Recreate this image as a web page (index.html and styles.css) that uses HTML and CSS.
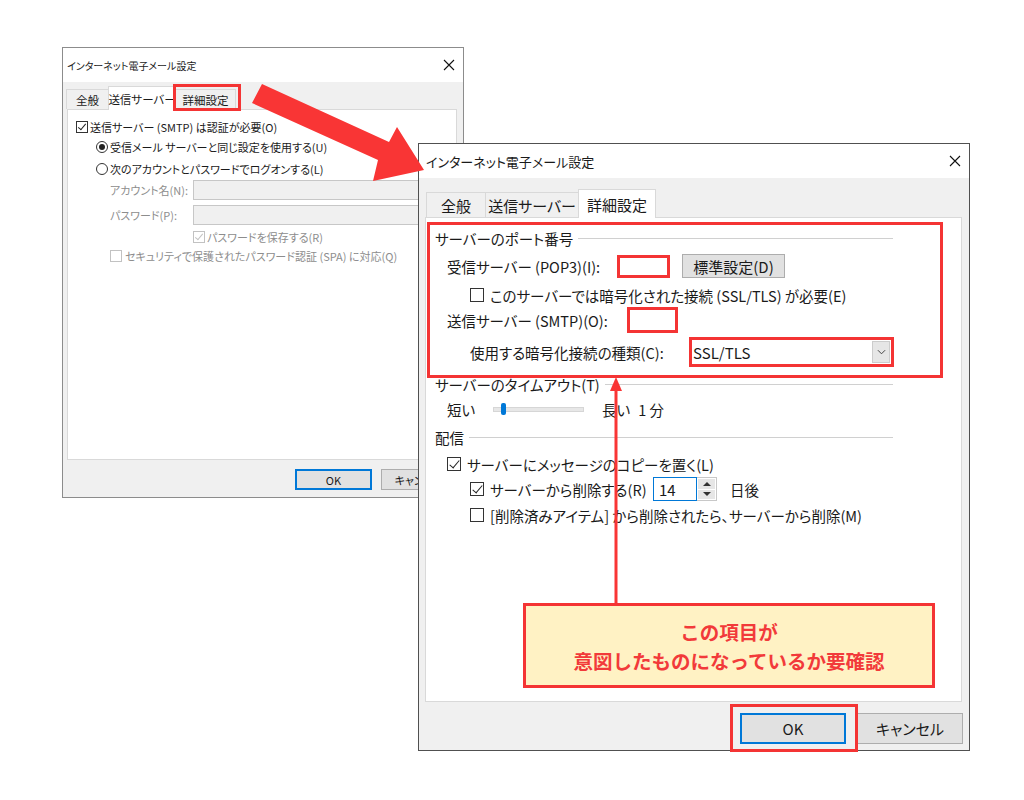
FILE: index.html
```html
<!DOCTYPE html>
<html lang="ja">
<head>
    <meta charset="UTF-8">
    <meta name="viewport" content="width=device-width, initial-scale=1.0">
    <title>インターネット電子メール設定</title>
    <link rel="stylesheet" href="styles.css">
</head>
<body>
<div class="desk">

    <!-- 後ろ: 送信サーバータブ -->
    <section class="dialog dlg-back">
        <div class="titlebar">
            <span>インターネット電子メール設定</span>
            <svg class="close" viewBox="0 0 12 12"><path d="M1 1L11 11M11 1L1 11"/></svg>
        </div>
        <div class="tabs">
            <div class="tab t-gen">全般</div>
            <div class="tab t-out active">送信サーバー</div>
            <div class="tab t-adv">詳細設定</div>
        </div>
        <div class="panel">
            <div class="row b1"><span class="cb on"></span>送信サーバー (SMTP) は認証が必要(O)</div>
            <div class="row b2"><span class="rb on"></span>受信メール サーバーと同じ設定を使用する(U)</div>
            <div class="row b3"><span class="rb"></span>次のアカウントとパスワードでログオンする(L)</div>
            <div class="row b4 muted"><span class="lbl">アカウント名(N):</span><span class="field off"></span></div>
            <div class="row b5 muted"><span class="lbl">パスワード(P):</span><span class="field off"></span></div>
            <div class="row b6 muted"><span class="cb on dis"></span>パスワードを保存する(R)</div>
            <div class="row b7 muted"><span class="cb dis"></span>セキュリティで保護されたパスワード認証 (SPA) に対応(Q)</div>
        </div>
        <div class="footer">
            <button class="btn default">OK</button>
            <button class="btn">キャンセル</button>
        </div>
    </section>

    <!-- 前: 詳細設定タブ -->
    <section class="dialog dlg-front">
        <div class="titlebar">
            <span>インターネット電子メール設定</span>
            <svg class="close" viewBox="0 0 12 12"><path d="M1 1L11 11M11 1L1 11"/></svg>
        </div>
        <div class="tabs">
            <div class="tab t-gen">全般</div>
            <div class="tab t-out">送信サーバー</div>
            <div class="tab t-adv active">詳細設定</div>
        </div>
        <div class="panel">
            <div class="group">サーバーのポート番号</div>
            <div class="row f-pop">
                <span class="lbl w170">受信サーバー (POP3)(I):</span>
                <span class="field hl w53"></span>
                <button class="btn std">標準設定(D)</button>
            </div>
            <div class="row f-ssl"><span class="cb"></span>このサーバーでは暗号化された接続 (SSL/TLS) が必要(E)</div>
            <div class="row f-smtp">
                <span class="lbl w180">送信サーバー (SMTP)(O):</span>
                <span class="field hl w51"></span>
            </div>
            <div class="row f-enc">
                <span class="lbl w219">使用する暗号化接続の種類(C):</span>
                <div class="select">
                    <span>SSL/TLS</span>
                    <span class="drop"><svg viewBox="0 0 10 6"><path d="M1 1L5 5L9 1"/></svg></span>
                </div>
            </div>
            <div class="group g-time">サーバーのタイムアウト(T)</div>
            <div class="row f-slide">
                <span class="lbl w46">短い</span>
                <span class="track"><span class="thumb"></span></span>
                <span class="long">長い</span>
                <span class="mins">1 分</span>
            </div>
            <div class="group g-deliv">配信</div>
            <div class="row f-c1"><span class="cb on"></span>サーバーにメッセージのコピーを置く(L)</div>
            <div class="row f-c2">
                <span class="cb on"></span>
                <span class="lbl w163">サーバーから削除する(R)</span>
                <div class="spin">
                    <span class="spin-val">14</span>
                    <span class="spin-btns"><i class="up"></i><i class="dn"></i></span>
                </div>
                <span class="days">日後</span>
            </div>
            <div class="row f-c3"><span class="cb"></span>[削除済みアイテム] から削除されたら、サーバーから削除(M)</div>
        </div>
        <div class="footer">
            <button class="btn default">OK</button>
            <button class="btn">キャンセル</button>
        </div>
    </section>

    <!-- 注釈 -->
    <svg class="notes" viewBox="0 0 1024 800">
        <polygon points="262,84 389,142 397,127 424,170 373,181 378,160 252,103"/>
        <line x1="616" y1="604" x2="616" y2="388"/>
        <polygon points="616,377 610,391 622,391"/>
    </svg>
    <div class="mark mark-tab"></div>
    <div class="mark mark-port"></div>
    <div class="mark mark-ok"></div>
    <div class="callout">
        <span>この項目が</span>
        <span>意図したものになっているか要確認</span>
    </div>
</div>
</body>
</html>
```

FILE: styles.css
```css
body {
    margin: 0;
    background: #ffffff;
}

.desk {
    position: relative;
    width: 1024px;
    height: 800px;
    overflow: hidden;
    background: #ffffff;
    font-family: "Noto Sans CJK JP", "Noto Sans", sans-serif;
    font-feature-settings: "palt";
    color: #1a1a1a;
}

/* ---------- window frame ---------- */

.dialog {
    position: absolute;
    box-sizing: border-box;
    display: flex;
    flex-direction: column;
    background: #f0f0f0;
    border: 1px solid #8c8c8c;
}

.dlg-back {
    left: 62px;
    top: 47px;
    width: 402px;
    height: 451px;
    font-size: 11px;
}

.dlg-front {
    left: 418px;
    top: 143px;
    width: 552px;
    height: 608px;
    font-size: 14.5px;
    border-color: #505050;
}

.titlebar {
    flex: none;
    display: flex;
    align-items: center;
    justify-content: space-between;
    height: 34px;
    background: #ffffff;
    padding: 0 8px 0 7px;
    white-space: nowrap;
}

.dlg-back .titlebar {
    padding-left: 4px;
    font-size: 10px;
}

.dlg-front .titlebar {
    font-size: 13px;
}

.close {
    width: 12px;
    height: 12px;
    fill: none;
    stroke: #111;
    stroke-width: 1.1;
}

/* ---------- tabs ---------- */

.tabs {
    flex: none;
    display: flex;
    align-items: flex-end;
    position: relative;
    z-index: 1;
}

.tab {
    box-sizing: border-box;
    display: flex;
    align-items: center;
    justify-content: center;
    white-space: nowrap;
    border: 1px solid #d9d9d9;
    border-bottom: none;
    background: #f0f0f0;
    margin-right: -1px;
}

.tab.active {
    background: #ffffff;
    margin-bottom: -1px;
}

.dlg-front .tabs {
    margin: 11px 0 0 7px;
    height: 28px;
    font-size: 15px;
}

.dlg-front .tab { height: 25px; }
.dlg-front .tab.active { height: 29px; }
.dlg-front .t-gen { width: 60px; }
.dlg-front .t-out { width: 94px; }
.dlg-front .t-adv { width: 78px; }

.dlg-back .tabs {
    margin: 4px 0 0 3px;
    height: 23px;
    font-size: 11.5px;
}

.dlg-back .tab { height: 20px; }
.dlg-back .tab.active { height: 24px; }
.dlg-back .t-gen { width: 43px; }
.dlg-back .t-out { width: 68px; }
.dlg-back .t-adv { width: 61px; }

/* ---------- panel ---------- */

.panel {
    flex: none;
    box-sizing: border-box;
    display: flex;
    flex-direction: column;
    background: #ffffff;
    border: 1px solid #d9d9d9;
}

.dlg-front .panel {
    margin: 0 7px 0 6px;
    height: 485px;
    padding: 10px 0 0 9px;
}

.dlg-back .panel {
    margin: 0 6px 0 4px;
    height: 351px;
    padding: 8px 0 0 8px;
}

.row {
    display: flex;
    align-items: center;
    white-space: nowrap;
}

.lbl {
    flex: none;
}

.w46 { width: 46px; }
.w163 { width: 163px; }
.w170 { width: 170px; }
.w180 { width: 180px; }
.w219 { width: 219px; }

.group {
    display: flex;
    align-items: center;
    gap: 5px;
    width: 458px;
    height: 20px;
}

.group::after {
    content: "";
    flex: 1;
    border-top: 1px solid #d0d0d0;
    margin-top: 1px;
}

/* front rows */
.f-pop   { margin-top: 6px; height: 24px; padding-left: 12px; }
.f-ssl   { margin-top: 7px; height: 20px; padding-left: 35px; }
.f-smtp  { margin-top: 2px; height: 26px; padding-left: 12px; }
.f-enc   { margin-top: 4px; height: 30px; padding-left: 35px; }
.g-time  { margin-top: 7px; }
.f-slide { margin-top: 5px; height: 20px; padding-left: 12px; }
.g-deliv { margin-top: 8px; }
.f-c1    { margin-top: 7px; height: 20px; padding-left: 12px; }
.f-c2    { margin-top: 3px; height: 24px; padding-left: 35px; }
.f-c3    { margin-top: 4px; height: 20px; padding-left: 35px; }

/* back rows */
.b1 { height: 18px; }
.b2 { margin-top: 2px; height: 18px; padding-left: 20px; }
.b3 { margin-top: 4px; height: 18px; padding-left: 20px; }
.b4 { margin-top: 2px; height: 20px; padding-left: 34px; }
.b5 { margin-top: 5px; height: 20px; padding-left: 34px; }
.b6 { margin-top: 3px; height: 18px; padding-left: 117px; }
.b7 { margin-top: 1px; height: 18px; padding-left: 34px; }

.b4 .lbl,
.b5 .lbl {
    width: 83px;
}

.muted {
    color: #8d8d8d;
}

/* ---------- controls ---------- */

.cb {
    flex: none;
    position: relative;
    box-sizing: border-box;
    width: 14px;
    height: 14px;
    border: 1px solid #333;
    background: #ffffff;
    margin-right: 6px;
}

.cb.on::after {
    content: "";
    position: absolute;
    left: 4px;
    top: 0;
    width: 4px;
    height: 9px;
    border: solid #222;
    border-width: 0 1.5px 1.5px 0;
    transform: rotate(40deg);
}

.dlg-back .cb {
    width: 12px;
    height: 12px;
    margin-right: 2px;
}

.dlg-back .cb.on::after {
    left: 3px;
    top: 0;
    width: 3px;
    height: 7px;
    border-width: 0 1px 1px 0;
}

.b7 .cb {
    margin-right: 3px;
}

.cb.dis,
.cb.dis::after {
    border-color: #c2c2c2;
}

.rb {
    flex: none;
    position: relative;
    box-sizing: border-box;
    width: 12px;
    height: 12px;
    border: 1px solid #333;
    border-radius: 50%;
    background: #ffffff;
    margin-right: 2px;
}

.rb.on::after {
    content: "";
    position: absolute;
    inset: 2px;
    border-radius: 50%;
    background: #222;
}

.field {
    flex: none;
    box-sizing: border-box;
    background: #ffffff;
}

.field.off {
    width: 260px;
    height: 20px;
    background: #f0f0f0;
    border: 1px solid #c7c7c7;
}

.field.hl {
    border: 3px solid #f43434;
}

.w53 { width: 53px; height: 23px; }
.w51 { width: 51px; height: 26px; }

.btn {
    flex: none;
    box-sizing: border-box;
    display: flex;
    align-items: center;
    justify-content: center;
    padding: 0;
    font: inherit;
    color: #1a1a1a;
    background: #e1e1e1;
    border: 1px solid #adadad;
}

.btn.default {
    border: 2px solid #0078d7;
}

.btn.std {
    width: 103px;
    height: 24px;
    margin-left: 12px;
    font-size: 15px;
}

.select {
    flex: none;
    box-sizing: border-box;
    display: flex;
    align-items: center;
    justify-content: space-between;
    width: 205px;
    height: 30px;
    padding: 0 1px 0 1px;
    background: #ffffff;
    border: 3px solid #f43434;
    font-size: 15px;
}

.drop {
    box-sizing: border-box;
    display: flex;
    align-items: center;
    justify-content: center;
    width: 18px;
    height: 22px;
    background: #e6e6e6;
    border: 1px solid #cccccc;
}

.drop svg {
    width: 9px;
    height: 6px;
    fill: none;
    stroke: #444;
    stroke-width: 1.1;
}

.track {
    flex: none;
    position: relative;
    box-sizing: border-box;
    width: 91px;
    height: 5px;
    background: #e7e7e7;
    border: 1px solid #d6d6d6;
}

.thumb {
    position: absolute;
    left: 7px;
    top: -5px;
    width: 5px;
    height: 12px;
    border-radius: 2px;
    background: #0078d7;
}

.long {
    margin-left: 18px;
}

.mins {
    margin-left: 8px;
}

.spin {
    flex: none;
    display: flex;
    height: 24px;
}

.spin-val {
    box-sizing: border-box;
    display: flex;
    align-items: center;
    width: 44px;
    padding-left: 5px;
    background: #ffffff;
    border: 1px solid #0078d7;
    font-size: 15px;
}

.spin-btns {
    box-sizing: border-box;
    display: flex;
    flex-direction: column;
    gap: 1px;
    width: 20px;
    padding: 1px;
    background: #ffffff;
    border: 1px solid #c8c8c8;
    border-left: none;
}

.spin-btns i {
    flex: 1;
    position: relative;
    background: #e6e6e6;
}

.spin-btns i::after {
    content: "";
    position: absolute;
    left: 50%;
    top: 50%;
    margin: -2px 0 0 -4px;
    border-left: 4px solid transparent;
    border-right: 4px solid transparent;
}

.spin-btns .up::after { border-bottom: 4px solid #333; }
.spin-btns .dn::after { border-top: 4px solid #333; }

.days {
    margin-left: 13px;
}

/* ---------- footer ---------- */

.footer {
    flex: none;
    display: flex;
    justify-content: flex-end;
}

.dlg-front .footer {
    gap: 11px;
    padding: 11px 6px 0 0;
    font-size: 15px;
}

.dlg-front .btn:not(.std) {
    width: 106px;
    height: 31px;
}

.dlg-back .footer {
    gap: 9px;
    padding: 9px 5px 0 0;
    font-size: 11px;
}

.dlg-back .footer .btn {
    width: 77px;
    height: 21px;
}

/* ---------- annotations ---------- */

.notes {
    position: absolute;
    left: 0;
    top: 0;
    width: 1024px;
    height: 800px;
    pointer-events: none;
    z-index: 5;
}

.notes polygon {
    fill: #f93535;
}

.notes line {
    stroke: #f93535;
    stroke-width: 3;
}

.mark {
    position: absolute;
    box-sizing: border-box;
    border: 3px solid #f43434;
    z-index: 4;
}

.mark-tab  { left: 173px; top: 84px;  width: 68px;  height: 27px; }
.mark-port { left: 427px; top: 222px; width: 516px; height: 156px; }
.mark-ok   { left: 730px; top: 704px; width: 128px; height: 48px; }

.callout {
    position: absolute;
    left: 523px;
    top: 603px;
    z-index: 6;
    box-sizing: border-box;
    width: 412px;
    height: 85px;
    display: flex;
    flex-direction: column;
    align-items: center;
    justify-content: center;
    background: #fff2c4;
    border: 3px solid #f43434;
    color: #f23a3a;
    font-size: 19.5px;
    font-weight: 700;
    font-feature-settings: normal;
    line-height: 29px;
}
```
